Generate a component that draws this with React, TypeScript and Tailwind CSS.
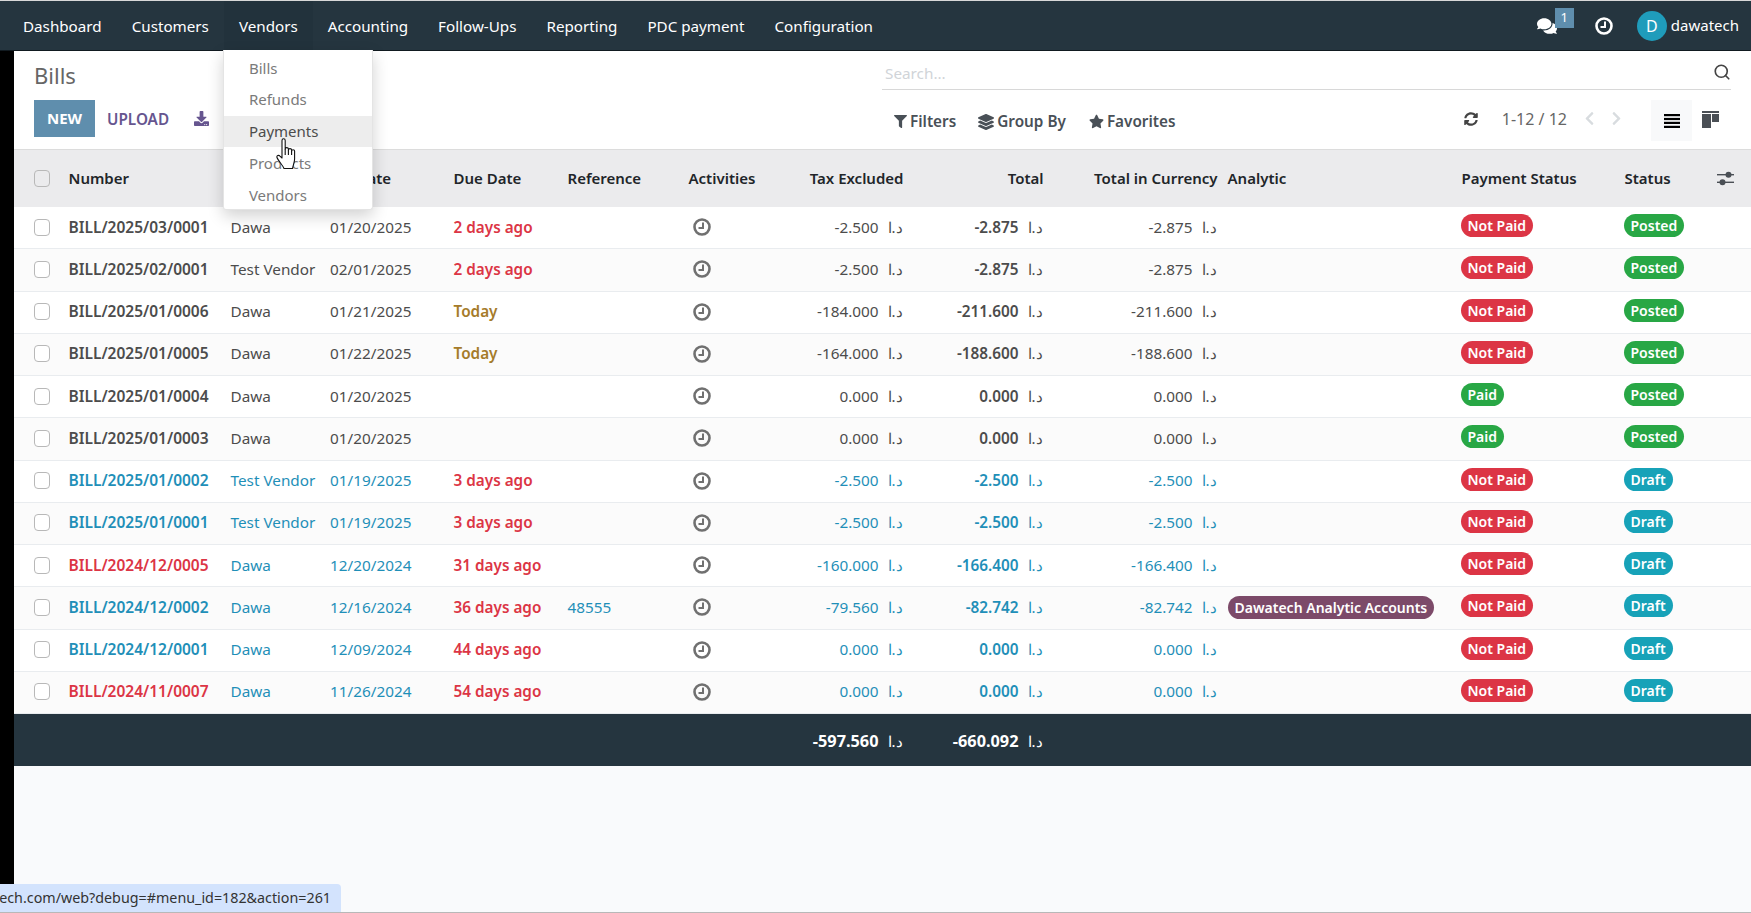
import React from 'react';
import { FaComments, FaFilter, FaLayerGroup, FaStar, FaSyncAlt, FaChevronLeft, FaChevronRight, FaDownload } from 'react-icons/fa';
import { Search } from 'lucide-react';

const cols = 'grid grid-cols-[54.5px_162px_99.5px_123.5px_114px_121px_112px_103px_140px_174px_244px_163px_92px_1fr] items-center';

type Row = {
    number: string;
    vendor: string;
    date: string;
    due?: string;
    dueKind?: 'late' | 'today';
    ref?: string;
    tax: string;
    total: string;
    analytic?: string;
    paid: boolean;
    draft: boolean;
    overdue?: boolean;
};

const rows: Row[] = [
    { number: 'BILL/2025/03/0001', vendor: 'Dawa', date: '01/20/2025', due: '2 days ago', dueKind: 'late', tax: '-2.500', total: '-2.875', paid: false, draft: false },
    { number: 'BILL/2025/02/0001', vendor: 'Test Vendor', date: '02/01/2025', due: '2 days ago', dueKind: 'late', tax: '-2.500', total: '-2.875', paid: false, draft: false },
    { number: 'BILL/2025/01/0006', vendor: 'Dawa', date: '01/21/2025', due: 'Today', dueKind: 'today', tax: '-184.000', total: '-211.600', paid: false, draft: false },
    { number: 'BILL/2025/01/0005', vendor: 'Dawa', date: '01/22/2025', due: 'Today', dueKind: 'today', tax: '-164.000', total: '-188.600', paid: false, draft: false },
    { number: 'BILL/2025/01/0004', vendor: 'Dawa', date: '01/20/2025', tax: '0.000', total: '0.000', paid: true, draft: false },
    { number: 'BILL/2025/01/0003', vendor: 'Dawa', date: '01/20/2025', tax: '0.000', total: '0.000', paid: true, draft: false },
    { number: 'BILL/2025/01/0002', vendor: 'Test Vendor', date: '01/19/2025', due: '3 days ago', dueKind: 'late', tax: '-2.500', total: '-2.500', paid: false, draft: true },
    { number: 'BILL/2025/01/0001', vendor: 'Test Vendor', date: '01/19/2025', due: '3 days ago', dueKind: 'late', tax: '-2.500', total: '-2.500', paid: false, draft: true },
    { number: 'BILL/2024/12/0005', vendor: 'Dawa', date: '12/20/2024', due: '31 days ago', dueKind: 'late', tax: '-160.000', total: '-166.400', paid: false, draft: true, overdue: true },
    { number: 'BILL/2024/12/0002', vendor: 'Dawa', date: '12/16/2024', due: '36 days ago', dueKind: 'late', ref: '48555', tax: '-79.560', total: '-82.742', analytic: 'Dawatech Analytic Accounts', paid: false, draft: true },
    { number: 'BILL/2024/12/0001', vendor: 'Dawa', date: '12/09/2024', due: '44 days ago', dueKind: 'late', tax: '0.000', total: '0.000', paid: false, draft: true },
    { number: 'BILL/2024/11/0007', vendor: 'Dawa', date: '11/26/2024', due: '54 days ago', dueKind: 'late', tax: '0.000', total: '0.000', paid: false, draft: true, overdue: true },
];

const menu = ['Dashboard', 'Customers', 'Vendors', 'Accounting', 'Follow-Ups', 'Reporting', 'PDC payment', 'Configuration'];
const vendorItems = ['Bills', 'Refunds', 'Payments', 'Products', 'Vendors'];

const ClockIcon = ({ size = 18 }: { size?: number }) => (
    <svg width={size} height={size} viewBox="0 0 18 18" fill="none" stroke="currentColor">
        <circle cx="9" cy="9" r="7.5" strokeWidth="2.6" />
        <path d="M10 4.5V10H5.5" strokeWidth="2" />
    </svg>
);

const ListIcon = () => (
    <svg width="16" height="14" viewBox="0 0 16 14" fill="currentColor">
        <rect y="0" width="16" height="2.2" />
        <rect y="3.9" width="16" height="2.2" />
        <rect y="7.8" width="16" height="2.2" />
        <rect y="11.8" width="16" height="2.2" />
    </svg>
);

const KanbanIcon = () => (
    <svg width="17" height="17" viewBox="0 0 17 17" fill="#4a4f55">
        <rect x="0" y="0" width="17" height="2" />
        <rect x="0" y="3" width="9" height="14" />
        <rect x="10" y="3" width="7" height="8" />
    </svg>
);

const SlidersIcon = () => (
    <svg width="17" height="15" viewBox="0 0 17 15" fill="#4a4f55">
        <rect x="0" y="3" width="17" height="1.4" />
        <rect x="0" y="10.6" width="17" height="1.4" />
        <circle cx="11.5" cy="3.7" r="3" />
        <circle cx="5.5" cy="11.3" r="3" />
    </svg>
);

const HandCursor = () => (
    <svg className="absolute left-[52px] top-[22px] z-30" width="22" height="33" viewBox="0 0 22 33" fill="white" stroke="#111111" strokeWidth="1.1" strokeLinejoin="round">
        <path d="M6 2.4c0-2.2 3.2-2.2 3.2 0V11c0-1.8 3.2-1.8 3.2 0v1c0-1.8 3.2-1.8 3.2 0v1c0-1.6 3-1.6 3 0v8c0 4-2 7-2 9.5H8c-1-3-6-8-7-11-.6-1.8 1.6-2.8 3-1.4L6 20Z" />
        <path d="M9.2 11v6M12.4 12v5M15.6 13v4" fill="none" />
    </svg>
);

const Currency = ({ className = '' }: { className?: string }) => (
    <span className={`ml-[9px] mr-[1px] inline-block w-[15px] text-right text-[15px] font-normal ${className}`}>د.ا</span>
);

const Badge = ({ label, className }: { label: string; className: string }) => (
    <span className={`inline-flex h-[23px] items-center rounded-full px-[7px] text-[14px] font-semibold text-white ${className}`}>{label}</span>
);

const Checkbox = ({ className = 'bg-white' }: { className?: string }) => (
    <span className={`block h-[17px] w-[16px] rounded-[4px] border border-[#b8b8b8] ${className}`} />
);

export default function App() {
    return (
        <div className="relative flex h-[913px] w-[1751px] flex-col overflow-hidden bg-[#f9fafc] font-['Noto_Sans','Open_Sans',sans-serif] text-[15.3px] text-[#4c4c4c]">
            <header className="flex h-[51px] shrink-0 items-center justify-between border-t border-b border-t-[#d8d8d8] border-b-[#111a20] bg-[#25353f] pl-[8px] text-white">
                <nav className="flex h-full items-stretch text-[15.2px]">
                    {menu.map(item => (
                        <div
                            key={item}
                            className={`relative flex items-center px-[15px] pt-[2px] ${item === 'Vendors' ? 'bg-[#22323c]' : ''}`}
                        >
                            {item}
                            {item === 'Vendors' && (
                                <div className="absolute -left-[1px] top-full z-20 h-[160px] w-[150px] rounded-b-[3px] border border-t-0 border-[#e4e4e4] bg-white pt-[2px] text-[15px] text-[#7a7a7a] shadow-[0_6px_16px_rgba(0,0,0,0.18)]">
                                    {vendorItems.map(sub => (
                                        <div
                                            key={sub}
                                            className={`relative flex h-[31.75px] items-center pl-[25px] ${sub === 'Payments' ? 'bg-[#ededed] text-[#4c4c4c]' : ''}`}
                                        >
                                            {sub}
                                            {sub === 'Payments' && <HandCursor />}
                                        </div>
                                    ))}
                                </div>
                            )}
                        </div>
                    ))}
                </nav>
                <div className="flex items-center text-[15px]">
                    <div className="relative mr-[38px]">
                        <FaComments size={20} />
                        <span className="absolute left-[18px] top-[-8px] flex h-[20px] w-[19px] items-center justify-center bg-[#5f8ead] text-[13px]">1</span>
                    </div>
                    <ClockIcon />
                    <span className="ml-[24px] flex h-[30px] w-[30px] items-center justify-center rounded-full bg-[#1f9cbb] text-[16px]">D</span>
                    <span className="ml-[4px] mr-[12px]">dawatech</span>
                </div>
            </header>

            <div className="flex min-h-0 flex-1">
                <div className="w-[14px] shrink-0 bg-black" />
                <main className="min-w-0 flex-1">
                    <section className="flex h-[99px] justify-between border-b border-[#dcdcdc] bg-white pl-[20px] pr-[20px]">
                        <div>
                            <h1 className="mt-[9px] text-[22px] leading-[30px] text-[#666666]">Bills</h1>
                            <div className="mt-[10px] flex items-center">
                                <button className="h-[37px] w-[61px] bg-[#5f8ead] text-[15px] font-bold text-white">NEW</button>
                                <button className="ml-[12px] pt-[1px] font-semibold text-[#66558f]">UPLOAD</button>
                                <FaDownload className="ml-[25px] text-[#66558f]" size={15} />
                            </div>
                        </div>
                        <div className="w-[849px]">
                            <div className="mt-[7px] flex h-[32px] items-center justify-between border-b border-[#d8d8d8] pl-[3px]">
                                <span className="text-[#d0d4d8]">Search...</span>
                                <Search className="mb-[3px] text-[#444444]" size={18} strokeWidth={2.2} />
                            </div>
                            <div className="flex items-start">
                                <div className="mt-[11px] flex h-[41px] items-center pl-[12px] font-semibold text-[#495057]">
                                    <FaFilter size={13} />
                                    <span className="ml-[3px]">Filters</span>
                                    <FaLayerGroup className="ml-[22px]" size={16} />
                                    <span className="ml-[3px]">Group By</span>
                                    <FaStar className="ml-[23px]" size={15} />
                                    <span className="ml-[3px]">Favorites</span>
                                </div>
                                <div className="ml-auto mt-[10px] flex h-[41px] items-center">
                                    <FaSyncAlt className="mb-[4px] text-[#444444]" size={14} />
                                    <span className="mb-[4px] ml-[24px] text-[16px] text-[#666666]">1-12 / 12</span>
                                    <FaChevronLeft className="mb-[4px] ml-[15px] text-[#d8dcdf]" size={15} />
                                    <FaChevronRight className="mb-[4px] ml-[12px] text-[#d8dcdf]" size={15} />
                                    <div className="ml-[27px] flex h-[41px] w-[41px] items-center justify-center bg-[#f8f9fa] text-black">
                                        <ListIcon />
                                    </div>
                                    <div className="ml-[10px] mr-[12px] mb-[2px]"><KanbanIcon /></div>
                                </div>
                            </div>
                        </div>
                    </section>

                    <div className={`${cols} h-[57px] bg-[#ebebed] text-[15px] font-semibold text-[#212529]`}>
                        <div className="pl-[20px]"><Checkbox className="bg-transparent" /></div>
                        <div>Number</div>
                        <div>Vendor</div>
                        <div>Bill Date</div>
                        <div>Due Date</div>
                        <div>Reference</div>
                        <div>Activities</div>
                        <div className="whitespace-nowrap text-right">Tax Excluded</div>
                        <div className="text-right">Total</div>
                        <div className="whitespace-nowrap text-right">Total in Currency</div>
                        <div className="pl-[10px]">Analytic</div>
                        <div>Payment Status</div>
                        <div>Status</div>
                        <div><SlidersIcon /></div>
                    </div>

                    {rows.map((r, i) => {
                        const tone = r.draft ? 'text-[#1f8fb8]' : '';
                        return (
                            <div
                                key={r.number}
                                className={`${cols} h-[42.25px] border-b border-[#e9ecef] pb-[1px] ${i % 2 ? 'bg-[#fbfbfb]' : 'bg-white'} ${tone}`}
                            >
                                <div className="pl-[20px]"><Checkbox /></div>
                                <div className={`whitespace-nowrap text-[15.5px] font-semibold ${r.overdue ? 'text-[#dc3545]' : ''}`}>{r.number}</div>
                                <div className="whitespace-nowrap">{r.vendor}</div>
                                <div>{r.date}</div>
                                <div className={`whitespace-nowrap font-semibold ${r.dueKind === 'late' ? 'text-[#dc3545]' : 'text-[#a57b2a]'}`}>{r.due}</div>
                                <div>{r.ref}</div>
                                <div className="pl-[4px] text-[#707070]"><ClockIcon /></div>
                                <div className="whitespace-nowrap text-right">{r.tax}<Currency /></div>
                                <div className="whitespace-nowrap text-right font-semibold">{r.total}<Currency /></div>
                                <div className="whitespace-nowrap text-right">{r.total}<Currency /></div>
                                <div className="pl-[10px] pt-[1px]">
                                    {r.analytic && <Badge label={r.analytic} className="bg-[#7c4a69]" />}
                                </div>
                                <div className="-ml-[1px] pb-[3px]">
                                    <Badge label={r.paid ? 'Paid' : 'Not Paid'} className={r.paid ? 'bg-[#28a745]' : 'bg-[#dc3545]'} />
                                </div>
                                <div className="-ml-[1px] pb-[3px]">
                                    <Badge label={r.draft ? 'Draft' : 'Posted'} className={r.draft ? 'bg-[#17a2b8]' : 'bg-[#28a745]'} />
                                </div>
                                <div />
                            </div>
                        );
                    })}

                    <div className={`${cols} h-[52px] bg-[#25353f] pt-[2px] text-[16.3px] font-bold text-white`}>
                        <div className="col-start-8 whitespace-nowrap text-right">-597.560<Currency /></div>
                        <div className="whitespace-nowrap text-right">-660.092<Currency /></div>
                    </div>
                </main>
            </div>

            <div className="absolute bottom-[1px] left-0 z-30 flex h-[28px] w-[341px] items-center justify-end overflow-hidden rounded-tr-[4px] bg-[#d3e3fd] pr-[10px] text-[14.3px] whitespace-nowrap text-[#333333]">
                ech.com/web?debug=#menu_id=182&amp;action=261
            </div>
            <div className="absolute bottom-0 left-0 h-[1px] w-full bg-[#b8b8b8]" />
        </div>
    );
}
